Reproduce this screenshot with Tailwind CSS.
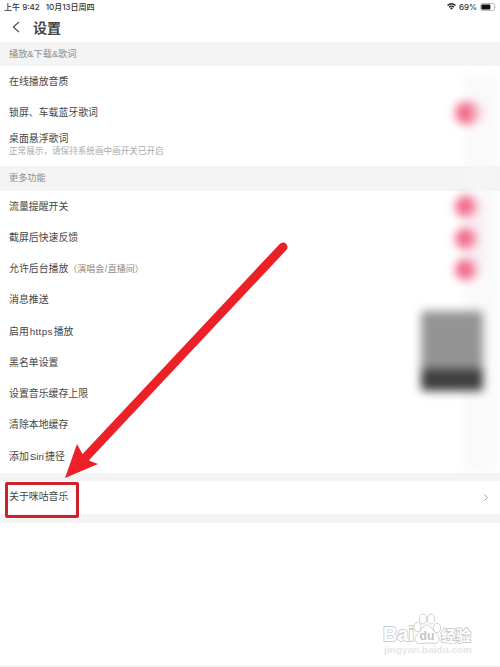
<!DOCTYPE html>
<html lang="zh-CN">
<head>
    <meta charset="UTF-8">
    <meta name="viewport" content="width=device-width, initial-scale=1.0">
    <title>设置</title>
    <script src="https://cdn.jsdelivr.net/npm/@tailwindcss/browser@4"></script>
</head>
<body class="bg-white h-screen overflow-hidden relative flex flex-col font-['Liberation_Sans','Noto_Sans_CJK_SC',sans-serif] text-[9.9px] text-[#454545]">
    <!-- Status bar -->
    <div class="h-[13px] shrink-0 flex items-center justify-between pl-1 pr-[3px] text-[8px] font-medium leading-none text-[#333] font-['Inter','Noto_Sans_CJK_SC',sans-serif]">
        <div class="flex gap-[6px] whitespace-nowrap">
            <span>上午 9:42</span>
            <span>10月13日周四</span>
        </div>
        <div class="flex items-center gap-[3px]">
            <svg class="w-[9px] h-[7px]" viewBox="0 0 18 14" fill="none" stroke="#222" stroke-width="2.6">
                <path d="M1 5 Q9 -2 17 5" />
                <path d="M4 8.3 Q9 4 14 8.3" />
                <path d="M6 10 Q9 8 12 10 L9 13.5 Z" fill="#222" stroke="none" />
            </svg>
            <span>69%</span>
            <svg class="w-[17px] h-[8px]" viewBox="0 0 17 8">
                <rect x="0.5" y="0.5" width="14" height="7" rx="2" fill="none" stroke="#aaa" stroke-width="0.8" />
                <rect x="1.4" y="1.4" width="9" height="5.2" rx="1" fill="#111" />
                <path d="M15.6 2.8 Q17 4 15.6 5.2 Z" fill="#aaa" />
            </svg>
        </div>
    </div>

    <!-- Title -->
    <header class="h-[28.5px] shrink-0 flex items-center pl-3 gap-[13px]">
        <svg class="w-2 h-[12px]" viewBox="0 0 8 12" fill="none" stroke="#444" stroke-width="1.1">
            <path d="M7 0.8 L1.4 6 L7 11.2" />
        </svg>
        <h1 class="text-[14px] leading-none font-bold text-[#444] pt-px">设置</h1>
    </header>

    <main>
        <h2 class="h-[24.5px] flex items-center px-[9px] pt-[2px] bg-[#f4f4f4] text-[9.2px] text-[#8c8c8c]">播放&amp;下载&amp;歌词</h2>
        <ul class="px-[9px]">
            <li class="h-[31px] flex items-center pt-[2px]">在线播放音质</li>
            <li class="h-[31px] flex items-center pt-[2px]">锁屏、车载蓝牙歌词</li>
            <li class="h-[38px] flex flex-col justify-center gap-[2px] pb-[5px] leading-[11px]">
                <span>桌面悬浮歌词</span>
                <span class="text-[8.6px] leading-[10px] text-[#aaa]">正常展示，请保持系统画中画开关已开启</span>
            </li>
        </ul>

        <h2 class="h-[24.5px] flex items-center px-[9px] pt-[2px] bg-[#f4f4f4] text-[9.2px] text-[#8c8c8c]">更多功能</h2>
        <ul class="px-[9px]">
            <li class="h-[31.25px] flex items-center pt-[2px]">流量提醒开关</li>
            <li class="h-[31.25px] flex items-center pt-[2px]">截屏后快速反馈</li>
            <li class="h-[31.25px] flex items-center pt-[2px]">允许后台播放<span class="text-[9px] text-[#888]">（演唱会<span class="px-[0.5px]">/</span>直播间）</span></li>
            <li class="h-[31.25px] flex items-center pt-[2px]">消息推送</li>
            <li class="h-[31.25px] flex items-center pt-[2px]">启用<span class="px-px tracking-[0.3px]">https</span>播放</li>
            <li class="h-[31.25px] flex items-center pt-[2px]">黑名单设置</li>
            <li class="h-[31.25px] flex items-center pt-[2px]">设置音乐缓存上限</li>
            <li class="h-[31.25px] flex items-center pt-[2px]">清除本地缓存</li>
            <li class="h-[31.25px] flex items-center pt-[2px]">添加<span class="px-px">Siri</span>捷径</li>
        </ul>

        <div class="border-t-8 border-b-9 border-[#f4f4f4] h-[50px] mt-px flex items-center justify-between pl-[9px] pr-3">
            <span>关于咪咕音乐</span>
            <svg class="w-[4px] h-[7px]" viewBox="0 0 4 7" fill="none" stroke="#999" stroke-width="0.9">
                <path d="M0.5 0.5 L3.4 3.5 L0.5 6.5" />
            </svg>
        </div>
    </main>

    <!-- Blurred controls on the right -->
    <div class="absolute left-[464px] top-[74px] w-[33px] h-[398px] bg-[#f5f5f5]/50 blur-[4px]"></div>
    <div class="absolute left-[455px] top-[102px] w-[22px] h-[22px] rounded-full bg-[#f2688a] blur-[5px]"></div>
    <div class="absolute left-[468px] top-[104px] w-[18px] h-[16px] rounded-full bg-[#f9c4d0]/40 blur-[5px]"></div>
    <div class="absolute left-[455px] top-[196px] w-[21px] h-[21px] rounded-full bg-[#f2688a] blur-[5px]"></div>
    <div class="absolute left-[455px] top-[228px] w-[21px] h-[21px] rounded-full bg-[#f2688a] blur-[5px]"></div>
    <div class="absolute left-[455px] top-[259px] w-[21px] h-[21px] rounded-full bg-[#f2688a] blur-[5px]"></div>
    <div class="absolute left-[468px] top-[200px] w-[16px] h-[76px] rounded-full bg-[#f9c4d0]/20 blur-[5px]"></div>
    <div class="absolute left-[421px] top-[311px] w-[62px] h-[80px] bg-[#949494] rounded-[4px] blur-[5px] flex items-end">
        <div class="w-full h-[22px] bg-[#404040] rounded-b-[4px]"></div>
    </div>

    <!-- Highlight box and arrow -->
    <div class="absolute left-[5px] top-[482px] w-[74px] h-[36px] border-3 border-[#d0202c] rounded-[2px]"></div>
    <svg class="absolute left-0 top-0 w-[500px] h-[667px]" viewBox="0 0 500 667">
        <path d="M283 247 L84 459" stroke="#ec2027" stroke-width="9" stroke-linecap="round" />
        <path d="M65 478 L77 444 L83 455 L90 461 L98 464 Z" fill="#ec2027" />
    </svg>

    <!-- Watermark -->
    <svg class="absolute left-[376px] top-[606px] w-[124px] h-[52px]" viewBox="0 0 124 52" fill="#fff" stroke="#ccc" stroke-width="0.9">
        <g style="paint-order: stroke" stroke-width="1.8" stroke-linejoin="round">
            <text x="7" y="35" font-family="Liberation Sans, sans-serif" font-size="21" font-weight="bold" textLength="31" lengthAdjust="spacingAndGlyphs">Bai</text>
            <text x="65" y="34.5" font-family="Noto Sans CJK SC, sans-serif" font-size="15" font-weight="bold" textLength="30">经验</text>
        </g>
        <ellipse cx="41.5" cy="21" rx="3.5" ry="4.5" />
        <ellipse cx="47" cy="13" rx="3.7" ry="5" />
        <ellipse cx="55" cy="13" rx="3.7" ry="5" />
        <ellipse cx="61" cy="22" rx="3.5" ry="4.5" />
        <path d="M51 19 C47 19 46 24 42 27.500 C36 33 40 38.500 45 37.500 C49 37 53 37 57 37.500 C64 38 65 32 60 27.500 C56 24 55 19 51 19 Z" />
        <text x="43.5" y="34" font-family="Liberation Sans, sans-serif" font-size="13" font-weight="bold" textLength="15" lengthAdjust="spacingAndGlyphs" fill="#c4c4c4" stroke="none">du</text>
        <text x="8" y="47" font-family="Liberation Sans, sans-serif" font-size="9.5" font-weight="bold" textLength="88" lengthAdjust="spacingAndGlyphs" fill="#e6e6e6" stroke="none">jingyan.baidu.com</text>
    </svg>
    <div class="absolute left-0 bottom-0 w-full h-px bg-[#eee]"></div>
</body>
</html>
